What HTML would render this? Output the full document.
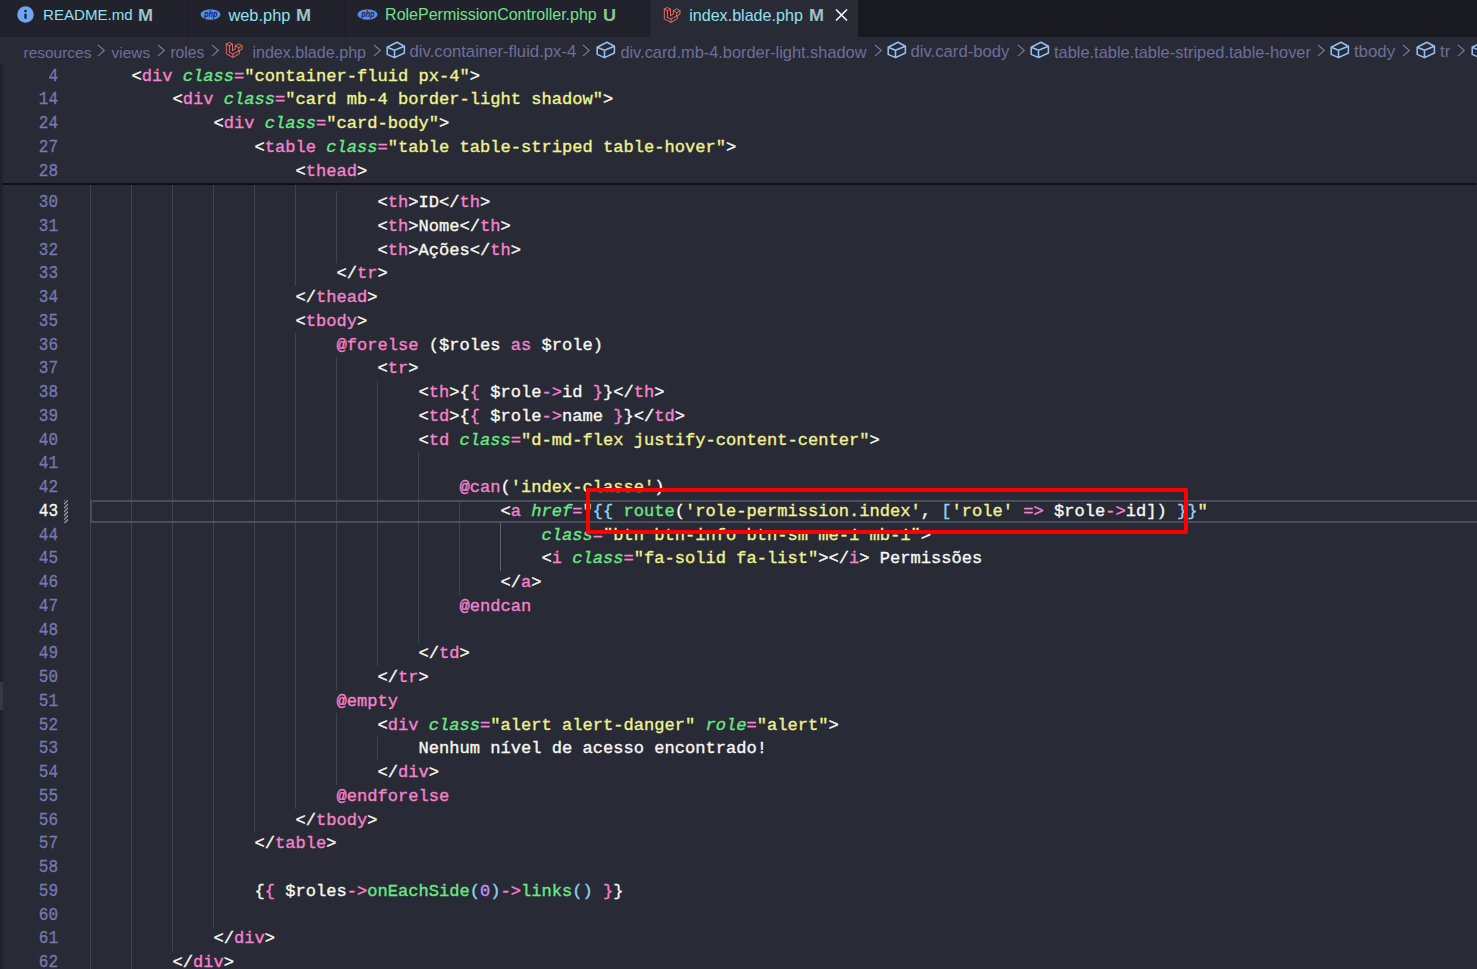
<!DOCTYPE html>
<html><head><meta charset="utf-8">
<style>
html,body{margin:0;padding:0;}
body{width:1477px;height:969px;overflow:hidden;background:#282a36;position:relative;font-family:"Liberation Sans",sans-serif;}
.abs{position:absolute;white-space:pre;}
svg{display:block;}
#tabs{position:absolute;z-index:7;left:0;top:0;width:1477px;height:36.5px;background:#191a21;}
.tab{position:absolute;top:0;height:36.5px;background:#21222c;}
.tab.active{background:#282a36;}
.tabt{font-size:16px;line-height:20px;color:#92e0ec;}
.badge{font-weight:bold;line-height:20px;color:#9cc3c6;transform:scaleX(1.1);transform-origin:0 0;}
#bc{position:absolute;z-index:7;left:0;top:36.5px;width:1477px;height:27.75px;background:#282a36;}
.bct{font-size:15.6px;line-height:20px;color:#6c6f9a;}
#editor{position:absolute;left:0;top:64.25px;width:1477px;height:904.75px;background:#282a36;overflow:hidden;}
.ln,.num{position:absolute;-webkit-text-stroke:0.35px currentColor;height:23.75px;line-height:23.75px;font-family:"Liberation Mono",monospace;font-size:17.083px;white-space:pre;}
.num{left:0;width:58.1px;text-align:right;color:#7479b0;font-size:19.2px !important;transform:scaleX(0.835) translateY(0.2px);transform-origin:58.1px 0;}
.num.cur{color:#f8f8f2;}
.g{position:absolute;width:1px;height:24.25px;background:#41434f;}
.g.ga{background:#60626e;}
.p{color:#f8f8f2} .t{color:#f582cb} .a{color:#6ae884;font-style:italic} .s{color:#eff290} .k{color:#f582cb} .f{color:#6ae884} .b{color:#90d4f5} .n{color:#bd93f9}
#sticky{position:absolute;left:0;top:64.25px;width:1477px;height:118.75px;background:#282a36;box-shadow:0 1.6px 0.8px rgba(10,10,16,0.85);z-index:5;}
#curline{position:absolute;left:90px;top:499.5px;width:1500px;height:23.75px;box-sizing:border-box;border:2.2px solid #4b4d5c;}
#hatch{position:absolute;left:63.9px;top:499.8px;width:4.3px;height:23px;overflow:hidden;}
#redbox{position:absolute;left:585.5px;top:488.2px;width:602.4px;height:45.4px;box-sizing:border-box;border:4.6px solid #ff0000;border-radius:2px;z-index:10;}
#leftstrip{position:absolute;left:0;top:63px;width:3px;height:906px;background:#20212a;z-index:6;}
#scrollind{position:absolute;left:0;top:681.7px;width:3px;height:28px;background:#373945;z-index:7;}
</style></head><body>
<div id="tabs">
  <div class="tab" style="left:0;width:187px"></div>
  <div class="tab" style="left:188px;width:157px"></div>
  <div class="tab" style="left:346px;width:303px"></div>
  <div class="tab active" style="left:649.5px;width:208.5px"></div>
  <div class="abs" style="left:16.5px;top:6.15px"><svg width="17" height="17" viewBox="0 0 17 17"><circle cx="8.5" cy="8.5" r="8.3" fill="#6ea6ef"/><rect x="7.45" y="7.7" width="2.1" height="5" fill="#0c1730"/><circle cx="8.5" cy="5.0" r="1.25" fill="#0c1730"/></svg></div>
  <span class="abs tabt" style="left:43.0px;top:5.47px;font-size:15.10px">README.md</span>
  <span class="abs badge" style="left:137.9px;top:5.42px;font-size:16.40px">M</span>
  <div class="abs" style="left:200.4px;top:9.2px"><svg width="21" height="11" viewBox="0 0 21 11"><ellipse cx="10.5" cy="5.5" rx="10" ry="5.2" fill="#5a8de6"/><text x="10.8" y="8.3" font-family="Liberation Sans" font-weight="bold" font-style="italic" font-size="8.6" text-anchor="middle" textLength="13" lengthAdjust="spacingAndGlyphs" fill="#12205a">php</text></svg></div>
  <span class="abs tabt" style="left:228.4px;top:5.02px;font-size:16.40px">web.php</span>
  <span class="abs badge" style="left:295.6px;top:5.42px;font-size:16.40px">M</span>
  <div class="abs" style="left:357.35px;top:9.2px"><svg width="21" height="11" viewBox="0 0 21 11"><ellipse cx="10.5" cy="5.5" rx="10" ry="5.2" fill="#5a8de6"/><text x="10.8" y="8.3" font-family="Liberation Sans" font-weight="bold" font-style="italic" font-size="8.6" text-anchor="middle" textLength="13" lengthAdjust="spacingAndGlyphs" fill="#12205a">php</text></svg></div>
  <span class="abs tabt" style="left:385.1px;top:5.16px;font-size:16.00px;color:#72e08a">RolePermissionController.php</span>
  <span class="abs badge" style="left:602.9px;top:4.52px;font-size:16.40px;color:#8cc88c">U</span>
  <div class="abs" style="left:663px;top:6px"><svg width="18" height="18" viewBox="-0.8 -0.8 18 18"><path d="M0.5 2.3 L3.6 0.6 L6.7 2.3 L6.7 8.8 M0.5 2.3 L3.6 4.0 L6.7 2.3 M3.6 4.0 L3.6 10.5 M0.5 2.3 L0.5 12 L7.1 15.6 L13.5 12 L13.5 8.8 M3.6 10.5 L7.1 12.4 L13.5 8.8 M7.1 12.4 L7.1 15.6 M9.5 3.9 L12.9 2.0 L16.2 3.9 L16.2 7.4 L13.5 8.9 M9.5 3.9 L12.9 5.8 L16.2 3.9 M12.9 5.8 L12.9 9.1 M9.5 3.9 L9.5 7.3 L6.7 8.8" fill="none" stroke="#ea6a5a" stroke-width="1.0" stroke-linejoin="round" stroke-linecap="round"/></svg></div>
  <span class="abs tabt" style="left:689.2px;top:5.12px;font-size:16.10px">index.blade.php</span>
  <span class="abs badge" style="left:809.4px;top:5.42px;font-size:16.40px">M</span>
  <svg class="abs" style="left:834.5px;top:9px" width="13" height="12" viewBox="0 0 13 12"><path d="M1 0.5 L12 11.5 M12 0.5 L1 11.5" stroke="#f8f8f2" stroke-width="1.6"/></svg>
</div>
<div id="bc">
<span class="abs bct" style="left:23.6px;top:6.15px;font-size:15.45px">resources</span><svg class="abs" style="left:96.5px;top:7.3px" width="10" height="14" viewBox="0 0 10 14"><path d="M0.9 0.9 L7.3 6.5 L0.9 12.1" fill="none" stroke="#7a7c9e" stroke-width="1.15"/></svg><span class="abs bct" style="left:111.5px;top:6.15px;font-size:15.45px">views</span><svg class="abs" style="left:156.5px;top:7.3px" width="10" height="14" viewBox="0 0 10 14"><path d="M0.9 0.9 L7.3 6.5 L0.9 12.1" fill="none" stroke="#7a7c9e" stroke-width="1.15"/></svg><span class="abs bct" style="left:170.4px;top:6.09px;font-size:15.60px">roles</span><svg class="abs" style="left:211.0px;top:7.3px" width="10" height="14" viewBox="0 0 10 14"><path d="M0.9 0.9 L7.3 6.5 L0.9 12.1" fill="none" stroke="#7a7c9e" stroke-width="1.15"/></svg><div class="abs" style="left:225.2px;top:4.5px"><svg width="18" height="18" viewBox="-0.8 -0.8 18 18"><path d="M0.5 2.3 L3.6 0.6 L6.7 2.3 L6.7 8.8 M0.5 2.3 L3.6 4.0 L6.7 2.3 M3.6 4.0 L3.6 10.5 M0.5 2.3 L0.5 12 L7.1 15.6 L13.5 12 L13.5 8.8 M3.6 10.5 L7.1 12.4 L13.5 8.8 M7.1 12.4 L7.1 15.6 M9.5 3.9 L12.9 2.0 L16.2 3.9 L16.2 7.4 L13.5 8.9 M9.5 3.9 L12.9 5.8 L16.2 3.9 M12.9 5.8 L12.9 9.1 M9.5 3.9 L9.5 7.3 L6.7 8.8" fill="none" stroke="#ea6a5a" stroke-width="1.0" stroke-linejoin="round" stroke-linecap="round"/></svg></div><span class="abs bct" style="left:252.4px;top:5.92px;font-size:16.10px">index.blade.php</span><svg class="abs" style="left:372.5px;top:7.3px" width="10" height="14" viewBox="0 0 10 14"><path d="M0.9 0.9 L7.3 6.5 L0.9 12.1" fill="none" stroke="#7a7c9e" stroke-width="1.15"/></svg><div class="abs" style="left:385.3px;top:3px"><svg width="22" height="20" viewBox="0 0 22 20"><path d="M2.2 7.25 L11.9 2.3 L19.4 6.3 L19.4 13 L9.5 17.6 L2.2 14.4 Z M2.2 7.25 L9.5 10.3 L19.4 6.3 M9.5 10.3 L9.5 17.6" fill="none" stroke="#93c0f4" stroke-width="1.55" stroke-linejoin="round"/></svg></div><span class="abs bct" style="left:409.6px;top:5.71px;font-size:16.70px">div.container-fluid.px-4</span><svg class="abs" style="left:582.3px;top:7.3px" width="10" height="14" viewBox="0 0 10 14"><path d="M0.9 0.9 L7.3 6.5 L0.9 12.1" fill="none" stroke="#7a7c9e" stroke-width="1.15"/></svg><div class="abs" style="left:595.2px;top:3px"><svg width="22" height="20" viewBox="0 0 22 20"><path d="M2.2 7.25 L11.9 2.3 L19.4 6.3 L19.4 13 L9.5 17.6 L2.2 14.4 Z M2.2 7.25 L9.5 10.3 L19.4 6.3 M9.5 10.3 L9.5 17.6" fill="none" stroke="#93c0f4" stroke-width="1.55" stroke-linejoin="round"/></svg></div><span class="abs bct" style="left:620.4px;top:5.82px;font-size:16.38px">div.card.mb-4.border-light.shadow</span><svg class="abs" style="left:873.5px;top:7.3px" width="10" height="14" viewBox="0 0 10 14"><path d="M0.9 0.9 L7.3 6.5 L0.9 12.1" fill="none" stroke="#7a7c9e" stroke-width="1.15"/></svg><div class="abs" style="left:886.4px;top:3px"><svg width="22" height="20" viewBox="0 0 22 20"><path d="M2.2 7.25 L11.9 2.3 L19.4 6.3 L19.4 13 L9.5 17.6 L2.2 14.4 Z M2.2 7.25 L9.5 10.3 L19.4 6.3 M9.5 10.3 L9.5 17.6" fill="none" stroke="#93c0f4" stroke-width="1.55" stroke-linejoin="round"/></svg></div><span class="abs bct" style="left:910.5px;top:5.71px;font-size:16.70px">div.card-body</span><svg class="abs" style="left:1017.1px;top:7.3px" width="10" height="14" viewBox="0 0 10 14"><path d="M0.9 0.9 L7.3 6.5 L0.9 12.1" fill="none" stroke="#7a7c9e" stroke-width="1.15"/></svg><div class="abs" style="left:1029.0px;top:3px"><svg width="22" height="20" viewBox="0 0 22 20"><path d="M2.2 7.25 L11.9 2.3 L19.4 6.3 L19.4 13 L9.5 17.6 L2.2 14.4 Z M2.2 7.25 L9.5 10.3 L19.4 6.3 M9.5 10.3 L9.5 17.6" fill="none" stroke="#93c0f4" stroke-width="1.55" stroke-linejoin="round"/></svg></div><span class="abs bct" style="left:1054.0px;top:5.82px;font-size:16.40px">table.table.table-striped.table-hover</span><svg class="abs" style="left:1317.0px;top:7.3px" width="10" height="14" viewBox="0 0 10 14"><path d="M0.9 0.9 L7.3 6.5 L0.9 12.1" fill="none" stroke="#7a7c9e" stroke-width="1.15"/></svg><div class="abs" style="left:1329.3px;top:3px"><svg width="22" height="20" viewBox="0 0 22 20"><path d="M2.2 7.25 L11.9 2.3 L19.4 6.3 L19.4 13 L9.5 17.6 L2.2 14.4 Z M2.2 7.25 L9.5 10.3 L19.4 6.3 M9.5 10.3 L9.5 17.6" fill="none" stroke="#93c0f4" stroke-width="1.55" stroke-linejoin="round"/></svg></div><span class="abs bct" style="left:1353.9px;top:5.64px;font-size:16.90px">tbody</span><svg class="abs" style="left:1401.9px;top:7.3px" width="10" height="14" viewBox="0 0 10 14"><path d="M0.9 0.9 L7.3 6.5 L0.9 12.1" fill="none" stroke="#7a7c9e" stroke-width="1.15"/></svg><div class="abs" style="left:1415.4px;top:3px"><svg width="22" height="20" viewBox="0 0 22 20"><path d="M2.2 7.25 L11.9 2.3 L19.4 6.3 L19.4 13 L9.5 17.6 L2.2 14.4 Z M2.2 7.25 L9.5 10.3 L19.4 6.3 M9.5 10.3 L9.5 17.6" fill="none" stroke="#93c0f4" stroke-width="1.55" stroke-linejoin="round"/></svg></div><span class="abs bct" style="left:1440.0px;top:5.71px;font-size:16.70px">tr</span><svg class="abs" style="left:1456.9px;top:7.3px" width="10" height="14" viewBox="0 0 10 14"><path d="M0.9 0.9 L7.3 6.5 L0.9 12.1" fill="none" stroke="#7a7c9e" stroke-width="1.15"/></svg><div class="abs" style="left:1469.6px;top:3px"><svg width="22" height="20" viewBox="0 0 22 20"><path d="M2.2 7.25 L11.9 2.3 L19.4 6.3 L19.4 13 L9.5 17.6 L2.2 14.4 Z M2.2 7.25 L9.5 10.3 L19.4 6.3 M9.5 10.3 L9.5 17.6" fill="none" stroke="#93c0f4" stroke-width="1.55" stroke-linejoin="round"/></svg></div>
</div>
<div id="editor" style="top:0;height:969px">
<div class="g" style="left:89.70px;top:167.00px"></div><div class="g" style="left:130.70px;top:167.00px"></div><div class="g" style="left:171.70px;top:167.00px"></div><div class="g" style="left:212.70px;top:167.00px"></div><div class="g" style="left:253.70px;top:167.00px"></div><div class="g" style="left:294.70px;top:167.00px"></div><div class="g" style="left:89.70px;top:190.75px"></div><div class="g" style="left:130.70px;top:190.75px"></div><div class="g" style="left:171.70px;top:190.75px"></div><div class="g" style="left:212.70px;top:190.75px"></div><div class="g" style="left:253.70px;top:190.75px"></div><div class="g" style="left:294.70px;top:190.75px"></div><div class="g" style="left:335.70px;top:190.75px"></div><div class="g" style="left:89.70px;top:214.50px"></div><div class="g" style="left:130.70px;top:214.50px"></div><div class="g" style="left:171.70px;top:214.50px"></div><div class="g" style="left:212.70px;top:214.50px"></div><div class="g" style="left:253.70px;top:214.50px"></div><div class="g" style="left:294.70px;top:214.50px"></div><div class="g" style="left:335.70px;top:214.50px"></div><div class="g" style="left:89.70px;top:238.25px"></div><div class="g" style="left:130.70px;top:238.25px"></div><div class="g" style="left:171.70px;top:238.25px"></div><div class="g" style="left:212.70px;top:238.25px"></div><div class="g" style="left:253.70px;top:238.25px"></div><div class="g" style="left:294.70px;top:238.25px"></div><div class="g" style="left:335.70px;top:238.25px"></div><div class="g" style="left:89.70px;top:262.00px"></div><div class="g" style="left:130.70px;top:262.00px"></div><div class="g" style="left:171.70px;top:262.00px"></div><div class="g" style="left:212.70px;top:262.00px"></div><div class="g" style="left:253.70px;top:262.00px"></div><div class="g" style="left:294.70px;top:262.00px"></div><div class="g" style="left:89.70px;top:285.75px"></div><div class="g" style="left:130.70px;top:285.75px"></div><div class="g" style="left:171.70px;top:285.75px"></div><div class="g" style="left:212.70px;top:285.75px"></div><div class="g" style="left:253.70px;top:285.75px"></div><div class="g" style="left:89.70px;top:309.50px"></div><div class="g" style="left:130.70px;top:309.50px"></div><div class="g" style="left:171.70px;top:309.50px"></div><div class="g" style="left:212.70px;top:309.50px"></div><div class="g" style="left:253.70px;top:309.50px"></div><div class="g" style="left:89.70px;top:333.25px"></div><div class="g" style="left:130.70px;top:333.25px"></div><div class="g" style="left:171.70px;top:333.25px"></div><div class="g" style="left:212.70px;top:333.25px"></div><div class="g" style="left:253.70px;top:333.25px"></div><div class="g" style="left:294.70px;top:333.25px"></div><div class="g" style="left:89.70px;top:357.00px"></div><div class="g" style="left:130.70px;top:357.00px"></div><div class="g" style="left:171.70px;top:357.00px"></div><div class="g" style="left:212.70px;top:357.00px"></div><div class="g" style="left:253.70px;top:357.00px"></div><div class="g" style="left:294.70px;top:357.00px"></div><div class="g" style="left:335.70px;top:357.00px"></div><div class="g" style="left:89.70px;top:380.75px"></div><div class="g" style="left:130.70px;top:380.75px"></div><div class="g" style="left:171.70px;top:380.75px"></div><div class="g" style="left:212.70px;top:380.75px"></div><div class="g" style="left:253.70px;top:380.75px"></div><div class="g" style="left:294.70px;top:380.75px"></div><div class="g" style="left:335.70px;top:380.75px"></div><div class="g" style="left:376.70px;top:380.75px"></div><div class="g" style="left:89.70px;top:404.50px"></div><div class="g" style="left:130.70px;top:404.50px"></div><div class="g" style="left:171.70px;top:404.50px"></div><div class="g" style="left:212.70px;top:404.50px"></div><div class="g" style="left:253.70px;top:404.50px"></div><div class="g" style="left:294.70px;top:404.50px"></div><div class="g" style="left:335.70px;top:404.50px"></div><div class="g" style="left:376.70px;top:404.50px"></div><div class="g" style="left:89.70px;top:428.25px"></div><div class="g" style="left:130.70px;top:428.25px"></div><div class="g" style="left:171.70px;top:428.25px"></div><div class="g" style="left:212.70px;top:428.25px"></div><div class="g" style="left:253.70px;top:428.25px"></div><div class="g" style="left:294.70px;top:428.25px"></div><div class="g" style="left:335.70px;top:428.25px"></div><div class="g" style="left:376.70px;top:428.25px"></div><div class="g" style="left:89.70px;top:452.00px"></div><div class="g" style="left:130.70px;top:452.00px"></div><div class="g" style="left:171.70px;top:452.00px"></div><div class="g" style="left:212.70px;top:452.00px"></div><div class="g" style="left:253.70px;top:452.00px"></div><div class="g" style="left:294.70px;top:452.00px"></div><div class="g" style="left:335.70px;top:452.00px"></div><div class="g" style="left:376.70px;top:452.00px"></div><div class="g" style="left:417.70px;top:452.00px"></div><div class="g" style="left:89.70px;top:475.75px"></div><div class="g" style="left:130.70px;top:475.75px"></div><div class="g" style="left:171.70px;top:475.75px"></div><div class="g" style="left:212.70px;top:475.75px"></div><div class="g" style="left:253.70px;top:475.75px"></div><div class="g" style="left:294.70px;top:475.75px"></div><div class="g" style="left:335.70px;top:475.75px"></div><div class="g" style="left:376.70px;top:475.75px"></div><div class="g" style="left:417.70px;top:475.75px"></div><div class="g" style="left:89.70px;top:499.50px"></div><div class="g" style="left:130.70px;top:499.50px"></div><div class="g" style="left:171.70px;top:499.50px"></div><div class="g" style="left:212.70px;top:499.50px"></div><div class="g" style="left:253.70px;top:499.50px"></div><div class="g" style="left:294.70px;top:499.50px"></div><div class="g" style="left:335.70px;top:499.50px"></div><div class="g" style="left:376.70px;top:499.50px"></div><div class="g" style="left:417.70px;top:499.50px"></div><div class="g" style="left:458.70px;top:499.50px"></div><div class="g" style="left:89.70px;top:523.25px"></div><div class="g" style="left:130.70px;top:523.25px"></div><div class="g" style="left:171.70px;top:523.25px"></div><div class="g" style="left:212.70px;top:523.25px"></div><div class="g" style="left:253.70px;top:523.25px"></div><div class="g" style="left:294.70px;top:523.25px"></div><div class="g" style="left:335.70px;top:523.25px"></div><div class="g" style="left:376.70px;top:523.25px"></div><div class="g" style="left:417.70px;top:523.25px"></div><div class="g" style="left:458.70px;top:523.25px"></div><div class="g ga" style="left:499.70px;top:523.25px"></div><div class="g" style="left:89.70px;top:547.00px"></div><div class="g" style="left:130.70px;top:547.00px"></div><div class="g" style="left:171.70px;top:547.00px"></div><div class="g" style="left:212.70px;top:547.00px"></div><div class="g" style="left:253.70px;top:547.00px"></div><div class="g" style="left:294.70px;top:547.00px"></div><div class="g" style="left:335.70px;top:547.00px"></div><div class="g" style="left:376.70px;top:547.00px"></div><div class="g" style="left:417.70px;top:547.00px"></div><div class="g" style="left:458.70px;top:547.00px"></div><div class="g ga" style="left:499.70px;top:547.00px"></div><div class="g" style="left:89.70px;top:570.75px"></div><div class="g" style="left:130.70px;top:570.75px"></div><div class="g" style="left:171.70px;top:570.75px"></div><div class="g" style="left:212.70px;top:570.75px"></div><div class="g" style="left:253.70px;top:570.75px"></div><div class="g" style="left:294.70px;top:570.75px"></div><div class="g" style="left:335.70px;top:570.75px"></div><div class="g" style="left:376.70px;top:570.75px"></div><div class="g" style="left:417.70px;top:570.75px"></div><div class="g" style="left:458.70px;top:570.75px"></div><div class="g" style="left:89.70px;top:594.50px"></div><div class="g" style="left:130.70px;top:594.50px"></div><div class="g" style="left:171.70px;top:594.50px"></div><div class="g" style="left:212.70px;top:594.50px"></div><div class="g" style="left:253.70px;top:594.50px"></div><div class="g" style="left:294.70px;top:594.50px"></div><div class="g" style="left:335.70px;top:594.50px"></div><div class="g" style="left:376.70px;top:594.50px"></div><div class="g" style="left:417.70px;top:594.50px"></div><div class="g" style="left:89.70px;top:618.25px"></div><div class="g" style="left:130.70px;top:618.25px"></div><div class="g" style="left:171.70px;top:618.25px"></div><div class="g" style="left:212.70px;top:618.25px"></div><div class="g" style="left:253.70px;top:618.25px"></div><div class="g" style="left:294.70px;top:618.25px"></div><div class="g" style="left:335.70px;top:618.25px"></div><div class="g" style="left:376.70px;top:618.25px"></div><div class="g" style="left:417.70px;top:618.25px"></div><div class="g" style="left:89.70px;top:642.00px"></div><div class="g" style="left:130.70px;top:642.00px"></div><div class="g" style="left:171.70px;top:642.00px"></div><div class="g" style="left:212.70px;top:642.00px"></div><div class="g" style="left:253.70px;top:642.00px"></div><div class="g" style="left:294.70px;top:642.00px"></div><div class="g" style="left:335.70px;top:642.00px"></div><div class="g" style="left:376.70px;top:642.00px"></div><div class="g" style="left:89.70px;top:665.75px"></div><div class="g" style="left:130.70px;top:665.75px"></div><div class="g" style="left:171.70px;top:665.75px"></div><div class="g" style="left:212.70px;top:665.75px"></div><div class="g" style="left:253.70px;top:665.75px"></div><div class="g" style="left:294.70px;top:665.75px"></div><div class="g" style="left:335.70px;top:665.75px"></div><div class="g" style="left:89.70px;top:689.50px"></div><div class="g" style="left:130.70px;top:689.50px"></div><div class="g" style="left:171.70px;top:689.50px"></div><div class="g" style="left:212.70px;top:689.50px"></div><div class="g" style="left:253.70px;top:689.50px"></div><div class="g" style="left:294.70px;top:689.50px"></div><div class="g" style="left:89.70px;top:713.25px"></div><div class="g" style="left:130.70px;top:713.25px"></div><div class="g" style="left:171.70px;top:713.25px"></div><div class="g" style="left:212.70px;top:713.25px"></div><div class="g" style="left:253.70px;top:713.25px"></div><div class="g" style="left:294.70px;top:713.25px"></div><div class="g" style="left:335.70px;top:713.25px"></div><div class="g" style="left:89.70px;top:737.00px"></div><div class="g" style="left:130.70px;top:737.00px"></div><div class="g" style="left:171.70px;top:737.00px"></div><div class="g" style="left:212.70px;top:737.00px"></div><div class="g" style="left:253.70px;top:737.00px"></div><div class="g" style="left:294.70px;top:737.00px"></div><div class="g" style="left:335.70px;top:737.00px"></div><div class="g" style="left:376.70px;top:737.00px"></div><div class="g" style="left:89.70px;top:760.75px"></div><div class="g" style="left:130.70px;top:760.75px"></div><div class="g" style="left:171.70px;top:760.75px"></div><div class="g" style="left:212.70px;top:760.75px"></div><div class="g" style="left:253.70px;top:760.75px"></div><div class="g" style="left:294.70px;top:760.75px"></div><div class="g" style="left:335.70px;top:760.75px"></div><div class="g" style="left:89.70px;top:784.50px"></div><div class="g" style="left:130.70px;top:784.50px"></div><div class="g" style="left:171.70px;top:784.50px"></div><div class="g" style="left:212.70px;top:784.50px"></div><div class="g" style="left:253.70px;top:784.50px"></div><div class="g" style="left:294.70px;top:784.50px"></div><div class="g" style="left:89.70px;top:808.25px"></div><div class="g" style="left:130.70px;top:808.25px"></div><div class="g" style="left:171.70px;top:808.25px"></div><div class="g" style="left:212.70px;top:808.25px"></div><div class="g" style="left:253.70px;top:808.25px"></div><div class="g" style="left:89.70px;top:832.00px"></div><div class="g" style="left:130.70px;top:832.00px"></div><div class="g" style="left:171.70px;top:832.00px"></div><div class="g" style="left:212.70px;top:832.00px"></div><div class="g" style="left:89.70px;top:855.75px"></div><div class="g" style="left:130.70px;top:855.75px"></div><div class="g" style="left:171.70px;top:855.75px"></div><div class="g" style="left:212.70px;top:855.75px"></div><div class="g" style="left:89.70px;top:879.50px"></div><div class="g" style="left:130.70px;top:879.50px"></div><div class="g" style="left:171.70px;top:879.50px"></div><div class="g" style="left:212.70px;top:879.50px"></div><div class="g" style="left:89.70px;top:903.25px"></div><div class="g" style="left:130.70px;top:903.25px"></div><div class="g" style="left:171.70px;top:903.25px"></div><div class="g" style="left:212.70px;top:903.25px"></div><div class="g" style="left:89.70px;top:927.00px"></div><div class="g" style="left:130.70px;top:927.00px"></div><div class="g" style="left:171.70px;top:927.00px"></div><div class="g" style="left:89.70px;top:950.75px"></div><div class="g" style="left:130.70px;top:950.75px"></div>
<div id="curline"></div>
<div id="hatch"><svg width="4.3" height="23" viewBox="0 0 4.3 23"><path d="M-1 1.35 L5.3 -4.95" stroke="#99a0a8" stroke-width="1.25"/><path d="M-1 5.20 L5.3 -1.10" stroke="#99a0a8" stroke-width="1.25"/><path d="M-1 9.05 L5.3 2.75" stroke="#99a0a8" stroke-width="1.25"/><path d="M-1 12.90 L5.3 6.60" stroke="#99a0a8" stroke-width="1.25"/><path d="M-1 16.75 L5.3 10.45" stroke="#99a0a8" stroke-width="1.25"/><path d="M-1 20.60 L5.3 14.30" stroke="#99a0a8" stroke-width="1.25"/><path d="M-1 24.45 L5.3 18.15" stroke="#99a0a8" stroke-width="1.25"/><path d="M-1 28.30 L5.3 22.00" stroke="#99a0a8" stroke-width="1.25"/><path d="M-1 32.15 L5.3 25.85" stroke="#99a0a8" stroke-width="1.25"/></svg></div>
<div class="ln" style="top:167.30px;left:336.50px"><span class="p">&lt;</span><span class="t">tr</span><span class="p">&gt;</span></div><div class="ln" style="top:191.05px;left:377.50px"><span class="p">&lt;</span><span class="t">th</span><span class="p">&gt;</span><span class="p">ID</span><span class="p">&lt;/</span><span class="t">th</span><span class="p">&gt;</span></div><div class="num" style="top:191.05px">30</div><div class="ln" style="top:214.80px;left:377.50px"><span class="p">&lt;</span><span class="t">th</span><span class="p">&gt;</span><span class="p">Nome</span><span class="p">&lt;/</span><span class="t">th</span><span class="p">&gt;</span></div><div class="num" style="top:214.80px">31</div><div class="ln" style="top:238.55px;left:377.50px"><span class="p">&lt;</span><span class="t">th</span><span class="p">&gt;</span><span class="p">Ações</span><span class="p">&lt;/</span><span class="t">th</span><span class="p">&gt;</span></div><div class="num" style="top:238.55px">32</div><div class="ln" style="top:262.30px;left:336.50px"><span class="p">&lt;/</span><span class="t">tr</span><span class="p">&gt;</span></div><div class="num" style="top:262.30px">33</div><div class="ln" style="top:286.05px;left:295.50px"><span class="p">&lt;/</span><span class="t">thead</span><span class="p">&gt;</span></div><div class="num" style="top:286.05px">34</div><div class="ln" style="top:309.80px;left:295.50px"><span class="p">&lt;</span><span class="t">tbody</span><span class="p">&gt;</span></div><div class="num" style="top:309.80px">35</div><div class="ln" style="top:333.55px;left:336.50px"><span class="k">@forelse</span><span class="p"> ($roles </span><span class="k">as</span><span class="p"> $role)</span></div><div class="num" style="top:333.55px">36</div><div class="ln" style="top:357.30px;left:377.50px"><span class="p">&lt;</span><span class="t">tr</span><span class="p">&gt;</span></div><div class="num" style="top:357.30px">37</div><div class="ln" style="top:381.05px;left:418.50px"><span class="p">&lt;</span><span class="t">th</span><span class="p">&gt;</span><span class="p">{</span><span class="k">{</span><span class="p"> $role</span><span class="k">-&gt;</span><span class="p">id </span><span class="k">}</span><span class="p">}</span><span class="p">&lt;/</span><span class="t">th</span><span class="p">&gt;</span></div><div class="num" style="top:381.05px">38</div><div class="ln" style="top:404.80px;left:418.50px"><span class="p">&lt;</span><span class="t">td</span><span class="p">&gt;</span><span class="p">{</span><span class="k">{</span><span class="p"> $role</span><span class="k">-&gt;</span><span class="p">name </span><span class="k">}</span><span class="p">}</span><span class="p">&lt;/</span><span class="t">td</span><span class="p">&gt;</span></div><div class="num" style="top:404.80px">39</div><div class="ln" style="top:428.55px;left:418.50px"><span class="p">&lt;</span><span class="t">td</span><span class="p"> </span><span class="a">class</span><span class="k">=</span><span class="s">&quot;d-md-flex justify-content-center&quot;</span><span class="p">&gt;</span></div><div class="num" style="top:428.55px">40</div><div class="ln" style="top:476.05px;left:459.50px"><span class="k">@can</span><span class="p">(</span><span class="s">&#x27;index-classe&#x27;</span><span class="p">)</span></div><div class="num" style="top:476.05px">42</div><div class="ln" style="top:499.80px;left:500.50px"><span class="p">&lt;</span><span class="t">a</span><span class="p"> </span><span class="a">href</span><span class="k">=</span><span class="s">&quot;</span><span class="b">{{</span><span class="p"> </span><span class="f">route</span><span class="p">(</span><span class="s">&#x27;role-permission.index&#x27;</span><span class="p">, </span><span class="b">[</span><span class="s">&#x27;role&#x27;</span><span class="p"> </span><span class="k">=&gt;</span><span class="p"> $role</span><span class="k">-&gt;</span><span class="p">id])</span><span class="p"> </span><span class="b">}}</span><span class="s">&quot;</span></div><div class="num cur" style="top:499.80px">43</div><div class="ln" style="top:523.55px;left:541.50px"><span class="a">class</span><span class="k">=</span><span class="s">&quot;btn btn-info btn-sm me-1 mb-1&quot;</span><span class="p">&gt;</span></div><div class="num" style="top:523.55px">44</div><div class="ln" style="top:547.30px;left:541.50px"><span class="p">&lt;</span><span class="t">i</span><span class="p"> </span><span class="a">class</span><span class="k">=</span><span class="s">&quot;fa-solid fa-list&quot;</span><span class="p">&gt;&lt;/</span><span class="t">i</span><span class="p">&gt; Permissões</span></div><div class="num" style="top:547.30px">45</div><div class="ln" style="top:571.05px;left:500.50px"><span class="p">&lt;/</span><span class="t">a</span><span class="p">&gt;</span></div><div class="num" style="top:571.05px">46</div><div class="ln" style="top:594.80px;left:459.50px"><span class="k">@endcan</span></div><div class="num" style="top:594.80px">47</div><div class="ln" style="top:642.30px;left:418.50px"><span class="p">&lt;/</span><span class="t">td</span><span class="p">&gt;</span></div><div class="num" style="top:642.30px">49</div><div class="ln" style="top:666.05px;left:377.50px"><span class="p">&lt;/</span><span class="t">tr</span><span class="p">&gt;</span></div><div class="num" style="top:666.05px">50</div><div class="ln" style="top:689.80px;left:336.50px"><span class="k">@empty</span></div><div class="num" style="top:689.80px">51</div><div class="ln" style="top:713.55px;left:377.50px"><span class="p">&lt;</span><span class="t">div</span><span class="p"> </span><span class="a">class</span><span class="k">=</span><span class="s">&quot;alert alert-danger&quot;</span><span class="p"> </span><span class="a">role</span><span class="k">=</span><span class="s">&quot;alert&quot;</span><span class="p">&gt;</span></div><div class="num" style="top:713.55px">52</div><div class="ln" style="top:737.30px;left:418.50px"><span class="p">Nenhum nível de acesso encontrado!</span></div><div class="num" style="top:737.30px">53</div><div class="ln" style="top:761.05px;left:377.50px"><span class="p">&lt;/</span><span class="t">div</span><span class="p">&gt;</span></div><div class="num" style="top:761.05px">54</div><div class="ln" style="top:784.80px;left:336.50px"><span class="k">@endforelse</span></div><div class="num" style="top:784.80px">55</div><div class="ln" style="top:808.55px;left:295.50px"><span class="p">&lt;/</span><span class="t">tbody</span><span class="p">&gt;</span></div><div class="num" style="top:808.55px">56</div><div class="ln" style="top:832.30px;left:254.50px"><span class="p">&lt;/</span><span class="t">table</span><span class="p">&gt;</span></div><div class="num" style="top:832.30px">57</div><div class="ln" style="top:879.80px;left:254.50px"><span class="p">{</span><span class="k">{</span><span class="p"> $roles</span><span class="k">-&gt;</span><span class="f">onEachSide</span><span class="b">(</span><span class="n">0</span><span class="b">)</span><span class="k">-&gt;</span><span class="f">links</span><span class="b">()</span><span class="p"> </span><span class="k">}</span><span class="p">}</span></div><div class="num" style="top:879.80px">59</div><div class="ln" style="top:927.30px;left:213.50px"><span class="p">&lt;/</span><span class="t">div</span><span class="p">&gt;</span></div><div class="num" style="top:927.30px">61</div><div class="ln" style="top:951.05px;left:172.50px"><span class="p">&lt;/</span><span class="t">div</span><span class="p">&gt;</span></div><div class="num" style="top:951.05px">62</div><div class="num" style="top:452.30px">41</div><div class="num" style="top:618.55px">48</div><div class="num" style="top:856.05px">58</div><div class="num" style="top:903.55px">60</div>
</div>
<div id="sticky" style="top:64.25px">
<div class="ln" style="top:0.30px;left:131.50px"><span class="p">&lt;</span><span class="t">div</span><span class="p"> </span><span class="a">class</span><span class="k">=</span><span class="s">&quot;container-fluid px-4&quot;</span><span class="p">&gt;</span></div><div class="num" style="top:0.30px">4</div><div class="ln" style="top:24.05px;left:172.50px"><span class="p">&lt;</span><span class="t">div</span><span class="p"> </span><span class="a">class</span><span class="k">=</span><span class="s">&quot;card mb-4 border-light shadow&quot;</span><span class="p">&gt;</span></div><div class="num" style="top:24.05px">14</div><div class="ln" style="top:47.80px;left:213.50px"><span class="p">&lt;</span><span class="t">div</span><span class="p"> </span><span class="a">class</span><span class="k">=</span><span class="s">&quot;card-body&quot;</span><span class="p">&gt;</span></div><div class="num" style="top:47.80px">24</div><div class="ln" style="top:71.55px;left:254.50px"><span class="p">&lt;</span><span class="t">table</span><span class="p"> </span><span class="a">class</span><span class="k">=</span><span class="s">&quot;table table-striped table-hover&quot;</span><span class="p">&gt;</span></div><div class="num" style="top:71.55px">27</div><div class="ln" style="top:95.30px;left:295.50px"><span class="p">&lt;</span><span class="t">thead</span><span class="p">&gt;</span></div><div class="num" style="top:95.30px">28</div>
</div>
<div id="redbox"></div>
<div id="leftstrip"></div>
<div id="scrollind"></div>
</body></html>
